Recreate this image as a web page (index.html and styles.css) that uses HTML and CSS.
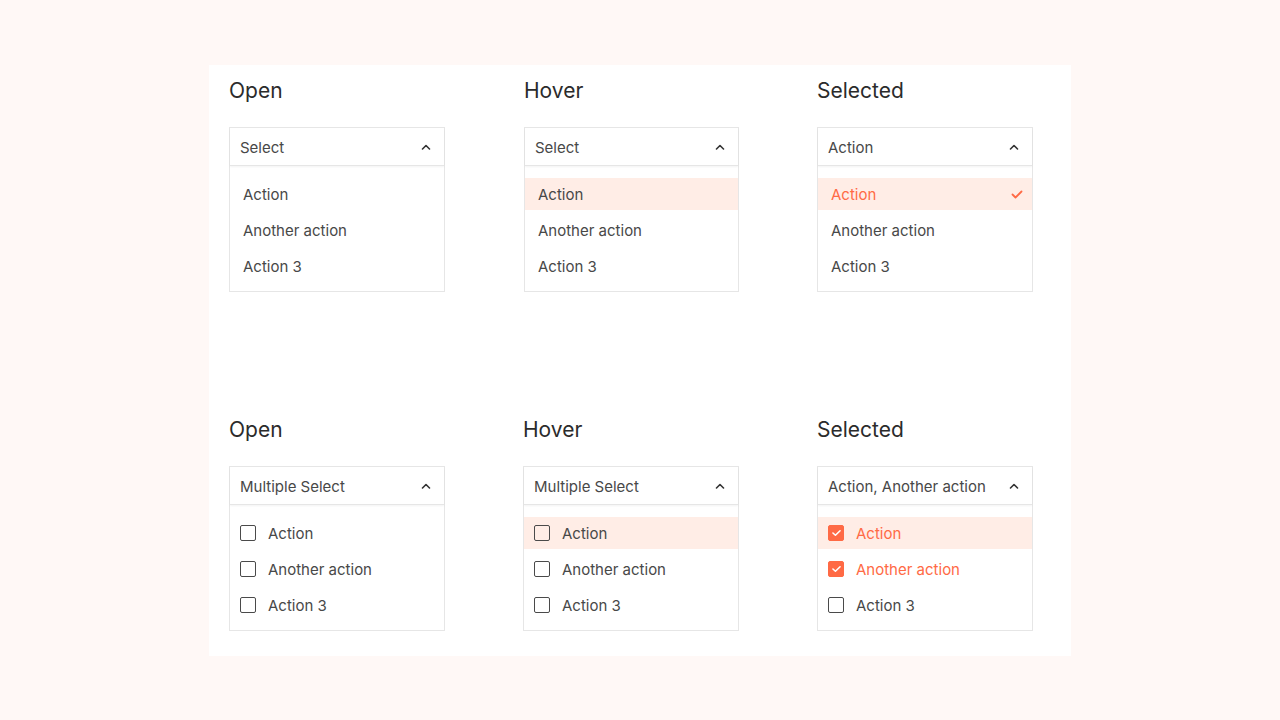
FILE: index.html
```html
<!DOCTYPE html>
<html>
<head>
<meta charset="utf-8">
<link rel="stylesheet" href="styles.css">
</head>
<body>
<div class="card">
  <div class="grid">
    <div class="cell">
      <h2 class="title">Open</h2>
      <div class="select">
        <div class="head"><span>Select</span><svg class="chev" viewBox="0 0 10 6"><path d="M1.5 5 L5 1.5 L8.5 5"/></svg></div>
        <ul class="list">
          <li class="item">Action</li>
          <li class="item">Another action</li>
          <li class="item">Action 3</li>
        </ul>
      </div>
    </div>
    <div class="cell narrow">
      <h2 class="title">Hover</h2>
      <div class="select">
        <div class="head"><span>Select</span><svg class="chev" viewBox="0 0 10 6"><path d="M1.5 5 L5 1.5 L8.5 5"/></svg></div>
        <ul class="list">
          <li class="item hover">Action</li>
          <li class="item">Another action</li>
          <li class="item">Action 3</li>
        </ul>
      </div>
    </div>
    <div class="cell">
      <h2 class="title">Selected</h2>
      <div class="select">
        <div class="head"><span>Action</span><svg class="chev" viewBox="0 0 10 6"><path d="M1.5 5 L5 1.5 L8.5 5"/></svg></div>
        <ul class="list">
          <li class="item hover active"><span>Action</span><svg class="tick" viewBox="0 0 12 9"><path d="M1.5 4.5 L4.5 7.5 L10.5 1.5"/></svg></li>
          <li class="item">Another action</li>
          <li class="item">Action 3</li>
        </ul>
      </div>
    </div>

    <div class="cell">
      <h2 class="title">Open</h2>
      <div class="select">
        <div class="head"><span>Multiple Select</span><svg class="chev" viewBox="0 0 10 6"><path d="M1.5 5 L5 1.5 L8.5 5"/></svg></div>
        <ul class="list multi">
          <li class="item"><span class="box"></span>Action</li>
          <li class="item"><span class="box"></span>Another action</li>
          <li class="item"><span class="box"></span>Action 3</li>
        </ul>
      </div>
    </div>
    <div class="cell shift">
      <h2 class="title">Hover</h2>
      <div class="select">
        <div class="head"><span>Multiple Select</span><svg class="chev" viewBox="0 0 10 6"><path d="M1.5 5 L5 1.5 L8.5 5"/></svg></div>
        <ul class="list multi">
          <li class="item hover"><span class="box"></span>Action</li>
          <li class="item"><span class="box"></span>Another action</li>
          <li class="item"><span class="box"></span>Action 3</li>
        </ul>
      </div>
    </div>
    <div class="cell">
      <h2 class="title">Selected</h2>
      <div class="select">
        <div class="head"><span>Action, Another action</span><svg class="chev" viewBox="0 0 10 6"><path d="M1.5 5 L5 1.5 L8.5 5"/></svg></div>
        <ul class="list multi">
          <li class="item hover active"><span class="box checked"><svg viewBox="0 0 12 9"><path d="M2 4.5 L4.8 7 L10 2"/></svg></span>Action</li>
          <li class="item active"><span class="box checked"><svg viewBox="0 0 12 9"><path d="M2 4.5 L4.8 7 L10 2"/></svg></span>Another action</li>
          <li class="item"><span class="box"></span>Action 3</li>
        </ul>
      </div>
    </div>
  </div>
</div>
</body>
</html>
```

FILE: styles.css
```css
html, body {
  margin: 0;
  padding: 0;
}
body {
  background: #fff8f6;
  font-family: "Inter", "Lato", sans-serif;
  color: #3d3d3d;
  width: 1280px;
  height: 720px;
  padding-top: 65px;
  box-sizing: border-box;
}
.card {
  background: #ffffff;
  width: 862px;
  margin-left: 209px;
  box-sizing: border-box;
  padding: 14px 20px 25px 20px;
}
.grid {
  display: grid;
  grid-template-columns: 295px 293px 216px;
  row-gap: 126px;
}
.cell {
  display: flex;
  flex-direction: column;
  width: 216px;
}
.cell.narrow {
  width: 215px;
}
.cell.shift {
  margin-left: -1px;
}
.title {
  margin: 0 0 24px 0;
  font-size: 21px;
  line-height: 24px;
  font-weight: 400;
  color: #2b2b2b;
  height: 24px;
}
.select {
  border: 1px solid #e6e6e6;
  background: #fff;
}
.head {
  height: 38px;
  display: flex;
  align-items: center;
  justify-content: space-between;
  padding: 2px 13px 0 10px;
  box-sizing: border-box;
  border-bottom: 1px solid #e6e6e6;
  box-shadow: 0 1px 2px rgba(0,0,0,0.05);
  font-size: 15px;
  color: #484848;
}
.chev {
  width: 10px;
  height: 6px;
  fill: none;
  stroke: #333;
  stroke-width: 1.6;
  stroke-linecap: round;
  stroke-linejoin: round;
  margin-top: -2px;
}
.list {
  list-style: none;
  margin: 0;
  padding: 12px 0 9px 0;
  display: flex;
  flex-direction: column;
  gap: 4px;
}
.item {
  height: 32px;
  display: flex;
  align-items: center;
  padding: 0 9px 0 13px;
  font-size: 15px;
  color: #484848;
}
.item.hover {
  background: #ffede6;
}
.item.active {
  color: #ff6a45;
  justify-content: space-between;
}
.tick {
  width: 12px;
  height: 9px;
  fill: none;
  stroke: #ff6a45;
  stroke-width: 1.8;
  stroke-linecap: round;
  stroke-linejoin: round;
}
.list.multi .item {
  padding-left: 10px;
  justify-content: flex-start;
}
.box {
  width: 16px;
  height: 16px;
  box-sizing: border-box;
  border: 1.5px solid #4a4a4a;
  border-radius: 2px;
  margin-right: 12px;
  flex: none;
  display: flex;
  align-items: center;
  justify-content: center;
}
.box.checked {
  background: #ff6a45;
  border-color: #ff6a45;
}
.box.checked svg {
  width: 11px;
  height: 8px;
  fill: none;
  stroke: #fff;
  stroke-width: 1.8;
  stroke-linecap: round;
  stroke-linejoin: round;
}
```
